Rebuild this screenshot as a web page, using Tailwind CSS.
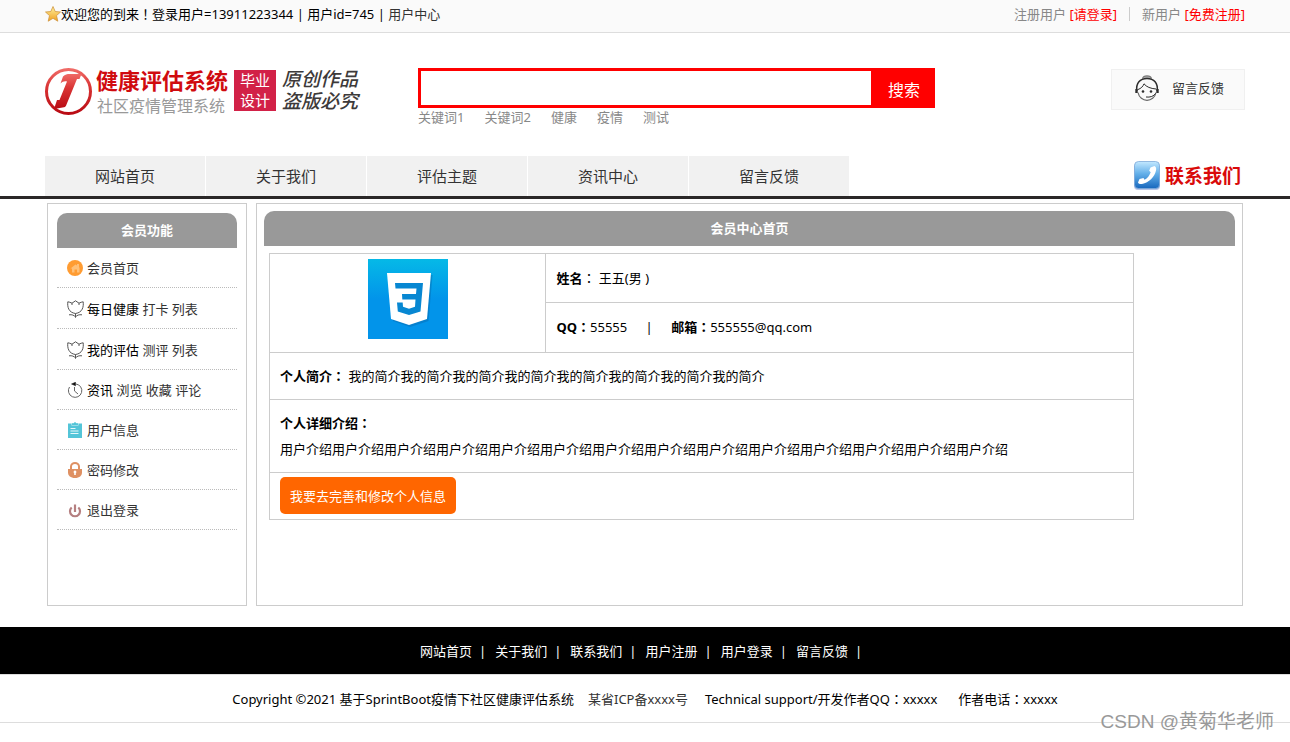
<!DOCTYPE html>
<html lang="zh-CN">
<head>
<meta charset="utf-8">
<title>会员中心首页</title>
<script src="https://cdn.jsdelivr.net/npm/@tailwindcss/browser@4"></script>
</head>
<body class="relative min-h-screen bg-white font-['Noto_Sans','Noto_Sans_CJK_SC',sans-serif] text-[13px] leading-5 text-black">

<div class="border-b border-[#dddddd] bg-[#fafafa]">
  <div class="mx-auto flex h-8 max-w-[1200px] items-center justify-between pb-[5px]">
    <div class="flex items-center">
      <svg class="size-4" viewBox="0 0 16 16" aria-hidden="true"><defs><linearGradient id="star" x2="0" y2="1"><stop stop-color="#fff3a0"/><stop offset="1" stop-color="#f0a020"/></linearGradient></defs><path d="M8 .5l2.200 5 5.300.5-4 3.600 1.300 5.600L8 12.300 3.200 15.200l1.300-5.600-4-3.600 5.300-.5z" fill="url(#star)" stroke="#cf9540" stroke-width=".8" stroke-linejoin="round"/></svg>
      <p>欢迎您的到来<span lang="zh-Hant" class="font-['Noto_Sans_CJK_TC',sans-serif]">！</span>登录用户=13911223344 | 用户id=745 | <a href="#" class="text-[#333333]">用户中心</a></p>
    </div>
    <div class="flex items-center text-[#888888]">
      <p>注册用户 <a href="#" class="text-[#ff0000]">[请登录]</a></p>
      <span class="mx-3 h-[14px] w-px bg-[#cccccc]"></span>
      <p>新用户 <a href="#" class="text-[#ff0000]">[免费注册]</a></p>
    </div>
  </div>
</div>

<header class="mx-auto flex h-[123px] max-w-[1200px] items-start pt-[35px]">
  <a href="#" class="flex w-[373px] shrink-0 items-start">
    <svg class="mt-[-2px] h-[50px] w-12" viewBox="0 0 48 50" aria-hidden="true">
      <defs><linearGradient id="logo" x2="0" y2="1"><stop stop-color="#ef6a66"/><stop offset=".4" stop-color="#d93434"/><stop offset="1" stop-color="#b90b14"/></linearGradient></defs>
      <circle cx="23.500" cy="25.500" r="22" fill="#fff" stroke="url(#logo)" stroke-width="3"/>
      <path d="M15.500 17.500L18 10.500C20 8.500 22 8 25 8h11.500l-2 5h-2.500L21.500 38.500c-.5 1.500-1 2.500-2.500 2.800L9 43l3-9h2.500L22 15.500c-2.500-.7-4.500 0-6.500 2z" fill="url(#logo)"/>
    </svg>
    <span class="ml-[3px] block">
      <strong class="block text-[22px] leading-[25px] text-[#d00b0f]">健康评估系统</strong>
      <span class="block pl-px text-[16px] leading-[26px] text-[#999999]">社区疫情管理系统</span>
    </span>
    <span class="ml-[6px] mt-[2px] block h-[41px] w-[42px] bg-[#d22147] text-center text-[15px] leading-5 text-white">毕业<br>设计</span>
    <span class="ml-[6px] block text-[19px] font-medium italic leading-[22px] text-[#3d3a3a]">原创作品<br>盗版必究</span>
  </a>
  <div>
    <form class="flex h-10 w-[517px] border-[3px] border-[#ff0000]">
      <input type="text" aria-label="搜索内容" class="min-w-0 flex-1 bg-white px-2 text-base outline-none">
      <button type="button" class="w-[61px] bg-[#ff0000] pl-[5px] pt-1 text-base text-white">搜索</button>
    </form>
    <p class="flex gap-5 leading-[18px] text-[#888888]"><a href="#">关键词1</a><a href="#">关键词2</a><a href="#">健康</a><a href="#">疫情</a><a href="#">测试</a></p>
  </div>
  <a href="#" class="ml-auto mt-px flex h-[41px] w-[134px] items-center border border-[#f0f0f0] bg-[#fafafa] pl-[23px] text-[#333333]">
    <svg class="mb-1 h-[26px] w-6" viewBox="0 0 24 26" fill="none" stroke="#2d2d2d" stroke-width="1.200" aria-hidden="true"><path d="M7.500 3.600C8.500 0 15.500 0 16.500 3.600" fill="#aaa" stroke="#777"/><path d="M1.800 16C.8 8 5 3.400 12 3.400S23.200 8 22.200 16" stroke-width="1.500"/><path d="M3 17.500C4 22.500 8 25.300 12 25.300s8-2.800 9-7.800" stroke="#666"/><path d="M3 14.500c3-1 5-3 6-5.700 2.500 3.200 6.500 4.700 12 5.200" stroke-width="1"/><path d="M1.500 14v4M22.500 14v4" stroke-width="2.400"/><path d="M11 22c4 .6 8-.8 9.500-3.500" stroke-width="1"/><circle cx="8" cy="16.500" r="1.300" fill="#2d2d2d" stroke="none"/><circle cx="16" cy="16.500" r="1.300" fill="#2d2d2d" stroke="none"/></svg>
    <span class="ml-[13px] pb-1">留言反馈</span>
  </a>
</header>

<div class="border-b-[3px] border-[#2a2727]">
  <div class="mx-auto flex h-10 max-w-[1200px] items-center">
    <nav class="flex gap-px text-center text-[15px] leading-10 text-[#333333]">
      <a href="#" class="w-40 bg-[#f1f1f1]">网站首页</a>
      <a href="#" class="w-40 bg-[#f1f1f1]">关于我们</a>
      <a href="#" class="w-40 bg-[#f1f1f1]">评估主题</a>
      <a href="#" class="w-40 bg-[#f1f1f1]">资讯中心</a>
      <a href="#" class="w-40 bg-[#f1f1f1]">留言反馈</a>
    </nav>
    <a href="#" class="ml-auto mr-1 flex items-center gap-1 text-[19px] font-bold text-[#d90a0a]">
      <svg class="h-[30px] w-7" viewBox="0 0 28 30" aria-hidden="true"><defs><linearGradient id="phone" x2="0" y2="1"><stop stop-color="#c3e8ff"/><stop offset=".45" stop-color="#64b0e9"/><stop offset="1" stop-color="#1767bd"/></linearGradient></defs><rect x="1" y="2" width="26" height="27" rx="4" fill="#b9c6e8"/><rect x="1.500" y=".5" width="25" height="27" rx="4" fill="url(#phone)" stroke="#7da9d9" stroke-width=".8"/><path d="M17.500 6.500l4-1.500c1.500.8 2 2.500 1.500 4.500-1.500 6.500-7 12-14 13.500-1.800.3-3.500-.3-4-1.500l1.500-3.500 4-1 1 1.800c3-1.500 5-4.300 6.200-7.500l-1.500-1.500z" fill="#fff"/></svg>
      <span>联系我们</span>
    </a>
  </div>
</div>

<main class="mx-auto mt-1 flex min-h-[403px] max-w-[1200px] gap-[9px] px-[2px]">
  <aside class="w-[200px] shrink-0 border border-[#cccccc] px-[9px] pt-[9px]">
    <h2 class="rounded-t-[10px] bg-[#999999] text-center font-bold leading-[35px] text-white">会员功能</h2>
    <ul class="text-[#333333]">
      <li class="flex h-10 items-center gap-1 border-b border-dotted border-[#bbbbbb] pl-[10px] pt-px">
        <svg class="size-4" viewBox="0 0 16 16" aria-hidden="true"><circle cx="8" cy="8" r="8" fill="#ff9c32"/><path d="M3.500 8.500L8.500 4.500l1.500 1V4h2v3l.5 1v4.500h-2.500V9.500H7.500v3H5V8.500z" fill="#ffc078"/></svg>
        <a href="#">会员首页</a>
      </li>
      <li class="flex h-[41px] items-center gap-[3px] border-b border-dotted border-[#bbbbbb] pl-[10px] pt-[2px]">
        <svg class="h-[18px] w-[17px]" viewBox="0 0 17 18" fill="none" stroke="#555" stroke-width="1" aria-hidden="true"><path d="M5 3.200L8.500.8 12 3.200M5 5V3.200C3.500 2.500 2 1.800.8 1.800.3 7 1.500 12.500 8.500 13.500 15.500 12.500 16.700 7 16.200 1.800 15 1.800 13.500 2.500 12 3.200V5M8.500 13.500v4M2 14.800c3-.4 5 .4 6.500 2.200 1.500-1.800 3.500-2.600 6.500-2.200"/></svg>
        <p><span class="text-black">每日健康</span> <a href="#">打卡</a> <a href="#">列表</a></p>
      </li>
      <li class="flex h-[41px] items-center gap-[3px] border-b border-dotted border-[#bbbbbb] pl-[10px] pt-[2px]">
        <svg class="h-[18px] w-[17px]" viewBox="0 0 17 18" fill="none" stroke="#555" stroke-width="1" aria-hidden="true"><path d="M5 3.200L8.500.8 12 3.200M5 5V3.200C3.500 2.500 2 1.800.8 1.800.3 7 1.500 12.500 8.500 13.500 15.500 12.500 16.700 7 16.200 1.800 15 1.800 13.500 2.500 12 3.200V5M8.500 13.500v4M2 14.800c3-.4 5 .4 6.500 2.200 1.500-1.800 3.500-2.600 6.500-2.200"/></svg>
        <p><span class="text-black">我的评估</span> <a href="#">测评</a> <a href="#">列表</a></p>
      </li>
      <li class="flex h-10 items-center gap-1 border-b border-dotted border-[#bbbbbb] pl-[10px] pt-px">
        <svg class="size-4" viewBox="0 0 16 16" fill="none" stroke="#666" stroke-width="1" aria-hidden="true"><path d="M2.500 5A6.700 6.700 0 1 0 9 2M7.500 5v4l3.500 3"/><path d="M8.500.2v3.600L4.500 2z" fill="#111" stroke="#111" stroke-width=".5"/></svg>
        <p><span class="text-black">资讯</span> <a href="#">浏览</a> <a href="#">收藏</a> <a href="#">评论</a></p>
      </li>
      <li class="flex h-10 items-center gap-1 border-b border-dotted border-[#bbbbbb] pl-[10px] pt-px">
        <svg class="size-4" viewBox="0 0 16 16" aria-hidden="true"><path d="M1 1.500h14V16H1z" fill="#54c5d8"/><path d="M4.500 1v2.500h7V1z" fill="#d8f3f6"/><path d="M5 3V1.300h1.700C7-.2 9-.2 9.300 1.300H11V3z" fill="#54c5d8"/><path d="M3.500 6.500h5M3.500 9h8M3.500 11.500h8" stroke="#e6f8fa" stroke-width="1.200"/></svg>
        <a href="#">用户信息</a>
      </li>
      <li class="flex h-10 items-center gap-1 border-b border-dotted border-[#bbbbbb] pl-[10px] pt-px">
        <svg class="size-4" viewBox="0 0 16 16" aria-hidden="true"><path d="M4 8V4.500a4 3.500 0 0 1 8 0V8" fill="none" stroke="#df9163" stroke-width="2"/><path d="M1 7h14v3.500c0 3-2.500 5.500-7 5.500s-7-2.500-7-5.500z" fill="#df9163"/><path d="M8 8.500a1.500 1.500 0 0 1 .8 2.700V13H7.200v-1.800A1.500 1.500 0 0 1 8 8.500z" fill="#fff"/></svg>
        <a href="#">密码修改</a>
      </li>
      <li class="flex h-10 items-center gap-1 border-b border-dotted border-[#bbbbbb] pl-[10px] pt-px">
        <svg class="size-4" viewBox="0 0 16 16" fill="none" stroke="#b57f80" stroke-width="2.200" aria-hidden="true"><path d="M4.700 5.500a5 5 0 1 0 6.600 0M8 2.500V10"/></svg>
        <a href="#">退出登录</a>
      </li>
    </ul>
  </aside>

  <section class="min-w-0 flex-1 border border-[#cccccc] px-[7px] pt-[7px]">
    <h1 class="rounded-t-[10px] bg-[#999999] text-center font-bold leading-[35px] text-white">会员中心首页</h1>
    <div class="px-[5px] pt-[7px]">
      <table class="w-9/10 table-fixed border-collapse">
        <colgroup><col class="w-[32%]"><col></colgroup>
        <tbody>
          <tr class="h-[49px]">
            <td rowspan="2" class="border border-[#cccccc] p-0">
              <svg class="mx-auto mb-2 block size-20" viewBox="0 0 80 80" role="img" aria-label="头像"><defs><linearGradient id="avatar" x2="0" y2="1"><stop stop-color="#05b9e7"/><stop offset=".5" stop-color="#0294ea"/></linearGradient></defs><path fill="url(#avatar)" d="M0 0h80v80H0z"/><path d="M21 16h43.500l-4 46L42 68l-17-6z" fill="#0869ac" opacity=".45"/><path d="M19 14h44l-4 46-18 6-18-6z" fill="#fff"/><path d="M27 24h28l-2.500 28.500L41 56l-11.200-3.500L29 43.500h5.700l.3 4.300 6 2 6-2 .5-7.300H34.300L34 35h14l.5-5.500H27.500z" fill="#0787d2"/></svg>
            </td>
            <td class="border border-[#cccccc] px-[10px] py-0"><b>姓名</b><span lang="zh-Hant" class="font-['Noto_Sans_CJK_TC',sans-serif]">：</span> 王五(男 )</td>
          </tr>
          <tr class="h-[50px]">
            <td class="border border-[#cccccc] px-[10px] pb-[2px] pt-0"><b>QQ<span lang="zh-Hant" class="font-['Noto_Sans_CJK_TC',sans-serif]">：</span></b>55555 <span class="mx-[15px]">|</span> <b>邮箱<span lang="zh-Hant" class="font-['Noto_Sans_CJK_TC',sans-serif]">：</span></b>555555@qq.com</td>
          </tr>
          <tr class="h-[47px]">
            <td colspan="2" class="border border-[#cccccc] px-[10px] py-0"><b>个人简介<span lang="zh-Hant" class="font-['Noto_Sans_CJK_TC',sans-serif]">：</span></b> 我的简介我的简介我的简介我的简介我的简介我的简介我的简介我的简介</td>
          </tr>
          <tr class="h-[73px]">
            <td colspan="2" class="border border-[#cccccc] px-[10px] py-0 leading-[26px]"><b>个人详细介绍<span lang="zh-Hant" class="font-['Noto_Sans_CJK_TC',sans-serif]">：</span></b><br>用户介绍用户介绍用户介绍用户介绍用户介绍用户介绍用户介绍用户介绍用户介绍用户介绍用户介绍用户介绍用户介绍用户介绍</td>
          </tr>
          <tr class="h-[47px]">
            <td colspan="2" class="border border-[#cccccc] px-[10px] py-0"><button type="button" class="mb-px block h-[37px] rounded-[5px] bg-[#ff6600] px-[10px] text-white">我要去完善和修改个人信息</button></td>
          </tr>
        </tbody>
      </table>
    </div>
  </section>
</main>

<footer class="mt-[21px]">
  <nav class="flex h-12 items-center justify-center gap-[9px] border-b border-[#dddddd] bg-black pr-2 text-white">
    <span class="flex gap-[7px]"><a href="#">网站首页</a>|</span>
    <span class="flex gap-[7px]"><a href="#">关于我们</a>|</span>
    <span class="flex gap-[7px]"><a href="#">联系我们</a>|</span>
    <span class="flex gap-[7px]"><a href="#">用户注册</a>|</span>
    <span class="flex gap-[7px]"><a href="#">用户登录</a>|</span>
    <span class="flex gap-[7px]"><a href="#">留言反馈</a>|</span>
  </nav>
  <div class="flex h-12 items-center justify-center border-b border-[#dddddd]">
    <span>Copyright ©2021 基于SprintBoot疫情下社区健康评估系统</span>
    <a href="#" class="ml-[14px] text-[#333333]">某省ICP备xxxx号</a>
    <span class="ml-[17px]">Technical support/开发作者QQ<span lang="zh-Hant" class="font-['Noto_Sans_CJK_TC',sans-serif]">：</span>xxxxx</span>
    <span class="ml-[21px]">作者电话<span lang="zh-Hant" class="font-['Noto_Sans_CJK_TC',sans-serif]">：</span>xxxxx</span>
  </div>
</footer>
<p class="absolute bottom-2 right-4 font-['Liberation_Sans','Noto_Sans_CJK_SC',sans-serif] text-[19px] leading-6 text-[#999999]">CSDN @黄菊华老师</p>
</body>
</html>
